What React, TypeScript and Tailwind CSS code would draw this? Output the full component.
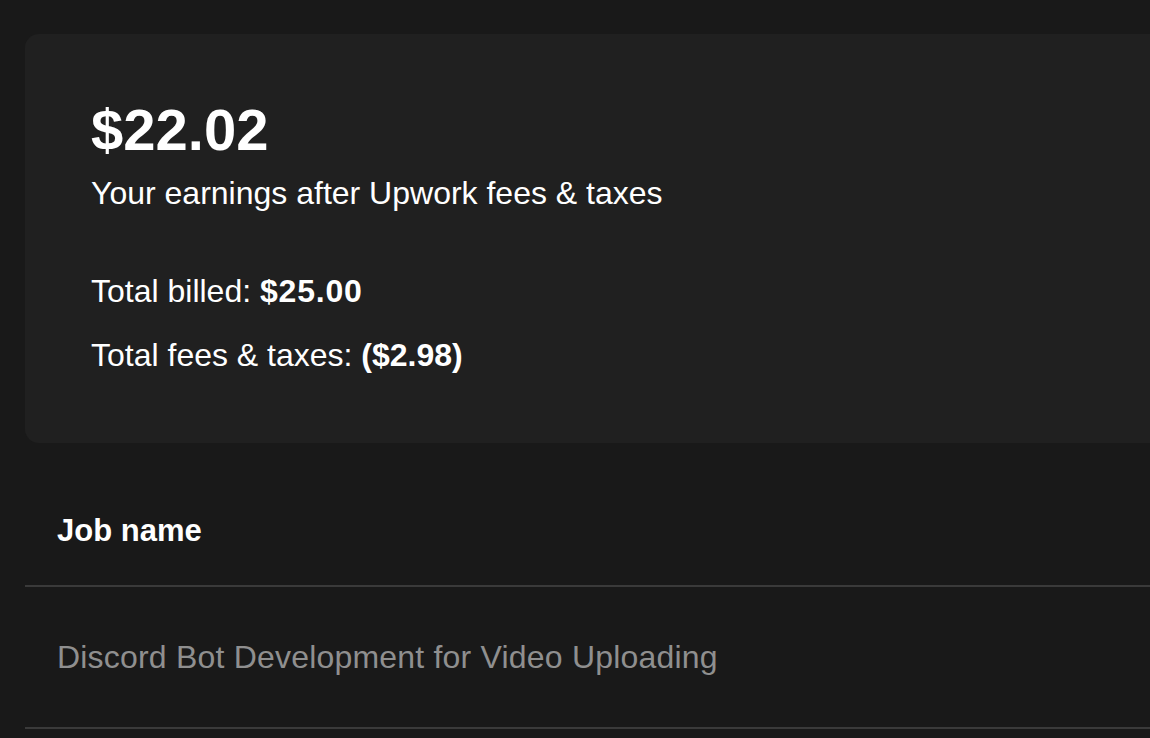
const jobs = ["Discord Bot Development for Video Uploading"];

export default function App() {
  return (
    <div className="h-[738px] w-full overflow-hidden bg-[#191919] font-['Liberation_Sans',Arial,sans-serif] text-white antialiased">
      <div className="w-[1200px] pl-[25px] pt-[34px]">
        <section className="rounded-[14px] bg-[#202020] pb-[68px] pl-[66px] pt-[67px]">
          <h1 className="text-[58px] font-bold leading-[58px]">$22.02</h1>
          <p className="mt-[14px] text-[32px] leading-[40px]">Your earnings after Upwork fees &amp; taxes</p>
          <div className="mt-[58px] flex flex-col gap-6 text-[32px] leading-[40px]">
            <p>
              Total billed: <span className="font-bold tracking-[0.8px]">$25.00</span>
            </p>
            <p>
              Total fees &amp; taxes: <span className="font-bold">($2.98)</span>
            </p>
          </div>
        </section>

        <table className="w-full border-collapse text-left">
          <thead>
            <tr className="border-b-2 border-[#3a3a3a]">
              <th className="pb-[34px] pl-8 pt-[68px] text-[31px] font-bold leading-[40px]">Job name</th>
            </tr>
          </thead>
          <tbody>
            {jobs.map((job) => (
              <tr key={job} className="border-b-2 border-[#3a3a3a]">
                <td className="py-[50px] pl-8 text-[32px] leading-[40px] tracking-[0.2px] text-[#8f8f8f]">{job}</td>
              </tr>
            ))}
          </tbody>
        </table>
      </div>
    </div>
  );
}
